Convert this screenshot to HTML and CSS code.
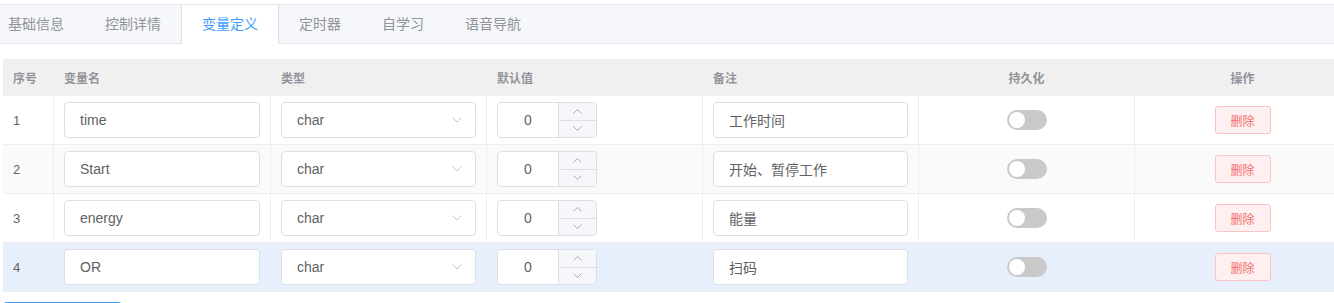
FILE: index.html
```html
<!DOCTYPE html>
<html lang="zh-CN">
<head>
    <meta charset="UTF-8">
    <meta name="viewport" content="width=device-width, initial-scale=1.0">
    <title>变量定义</title>
    <link rel="stylesheet" href="styles.css">
</head>
<body>
    <div class="page">
        <div class="tabs">
            <div class="tab">基础信息</div>
            <div class="tab">控制详情</div>
            <div class="tab active">变量定义</div>
            <div class="tab">定时器</div>
            <div class="tab">自学习</div>
            <div class="tab">语音导航</div>
        </div>

        <div class="var-table">
            <div class="row head">
                <div class="cell">序号</div>
                <div class="cell">变量名</div>
                <div class="cell">类型</div>
                <div class="cell">默认值</div>
                <div class="cell">备注</div>
                <div class="cell center">持久化</div>
                <div class="cell center">操作</div>
            </div>

            <div class="row">
                <div class="cell">1</div>
                <div class="cell"><input class="text-input" type="text" value="time"></div>
                <div class="cell"><div class="select">char<svg class="arrow" width="10" height="6" viewBox="0 0 10 6"><path d="M0.5 0.5 L5 5 L9.5 0.5" fill="none" stroke="#c0c4cc"/></svg></div></div>
                <div class="cell">
                    <div class="num">
                        <span class="num-value">0</span>
                        <span class="num-ctrl">
                            <span class="spin"><svg width="9" height="5" viewBox="0 0 9 5"><path d="M0.5 4.5 L4.5 0.5 L8.5 4.5" fill="none" stroke="#a8abb2"/></svg></span>
                            <span class="spin"><svg width="9" height="5" viewBox="0 0 9 5"><path d="M0.5 0.5 L4.5 4.5 L8.5 0.5" fill="none" stroke="#a8abb2"/></svg></span>
                        </span>
                    </div>
                </div>
                <div class="cell"><input class="text-input" type="text" value="工作时间"></div>
                <div class="cell center"><span class="switch"></span></div>
                <div class="cell center"><button class="btn-del">删除</button></div>
            </div>

            <div class="row striped">
                <div class="cell">2</div>
                <div class="cell"><input class="text-input" type="text" value="Start"></div>
                <div class="cell"><div class="select">char<svg class="arrow" width="10" height="6" viewBox="0 0 10 6"><path d="M0.5 0.5 L5 5 L9.5 0.5" fill="none" stroke="#c0c4cc"/></svg></div></div>
                <div class="cell">
                    <div class="num">
                        <span class="num-value">0</span>
                        <span class="num-ctrl">
                            <span class="spin"><svg width="9" height="5" viewBox="0 0 9 5"><path d="M0.5 4.5 L4.5 0.5 L8.5 4.5" fill="none" stroke="#a8abb2"/></svg></span>
                            <span class="spin"><svg width="9" height="5" viewBox="0 0 9 5"><path d="M0.5 0.5 L4.5 4.5 L8.5 0.5" fill="none" stroke="#a8abb2"/></svg></span>
                        </span>
                    </div>
                </div>
                <div class="cell"><input class="text-input" type="text" value="开始、暂停工作"></div>
                <div class="cell center"><span class="switch"></span></div>
                <div class="cell center"><button class="btn-del">删除</button></div>
            </div>

            <div class="row">
                <div class="cell">3</div>
                <div class="cell"><input class="text-input" type="text" value="energy"></div>
                <div class="cell"><div class="select">char<svg class="arrow" width="10" height="6" viewBox="0 0 10 6"><path d="M0.5 0.5 L5 5 L9.5 0.5" fill="none" stroke="#c0c4cc"/></svg></div></div>
                <div class="cell">
                    <div class="num">
                        <span class="num-value">0</span>
                        <span class="num-ctrl">
                            <span class="spin"><svg width="9" height="5" viewBox="0 0 9 5"><path d="M0.5 4.5 L4.5 0.5 L8.5 4.5" fill="none" stroke="#a8abb2"/></svg></span>
                            <span class="spin"><svg width="9" height="5" viewBox="0 0 9 5"><path d="M0.5 0.5 L4.5 4.5 L8.5 0.5" fill="none" stroke="#a8abb2"/></svg></span>
                        </span>
                    </div>
                </div>
                <div class="cell"><input class="text-input" type="text" value="能量"></div>
                <div class="cell center"><span class="switch"></span></div>
                <div class="cell center"><button class="btn-del">删除</button></div>
            </div>

            <div class="row current">
                <div class="cell">4</div>
                <div class="cell"><input class="text-input" type="text" value="OR"></div>
                <div class="cell"><div class="select">char<svg class="arrow" width="10" height="6" viewBox="0 0 10 6"><path d="M0.5 0.5 L5 5 L9.5 0.5" fill="none" stroke="#c0c4cc"/></svg></div></div>
                <div class="cell">
                    <div class="num">
                        <span class="num-value">0</span>
                        <span class="num-ctrl">
                            <span class="spin"><svg width="9" height="5" viewBox="0 0 9 5"><path d="M0.5 4.5 L4.5 0.5 L8.5 4.5" fill="none" stroke="#a8abb2"/></svg></span>
                            <span class="spin"><svg width="9" height="5" viewBox="0 0 9 5"><path d="M0.5 0.5 L4.5 4.5 L8.5 0.5" fill="none" stroke="#a8abb2"/></svg></span>
                        </span>
                    </div>
                </div>
                <div class="cell"><input class="text-input" type="text" value="扫码"></div>
                <div class="cell center"><span class="switch"></span></div>
                <div class="cell center"><button class="btn-del">删除</button></div>
            </div>
        </div>

        <div class="actions">
            <button class="btn-add" aria-label="新增变量"></button>
        </div>
    </div>
</body>
</html>
```

FILE: styles.css
```css
* {
    margin: 0;
    padding: 0;
    box-sizing: border-box;
}

html, body {
    overflow: hidden;
}

body {
    background: #fff;
    font-family: "Liberation Sans", "Noto Sans CJK SC", sans-serif;
    color: #606266;
}

.page {
    padding: 4px 0 0 3px;
}

/* tab header */
.tabs {
    display: flex;
    height: 40px;
    margin-left: -16px;
    margin-right: -20px;
    background: #f5f7fa;
    border-top: 1px solid #e4e7ed;
    border-bottom: 1px solid #e4e7ed;
}

.tab {
    height: 39px;
    line-height: 38px;
    padding: 0 20px;
    font-size: 14px;
    color: #909399;
    border-left: 1px solid transparent;
    border-right: 1px solid transparent;
    margin-left: -1px;
    white-space: nowrap;
}

.tab:first-child {
    margin-left: 0;
}

.tab.active {
    background: #fff;
    color: #409eff;
    border-left-color: #dcdfe6;
    border-right-color: #dcdfe6;
}

/* variable table */
.var-table {
    margin-top: 15px;
    width: 1348px;
    font-size: 13px;
}

.row {
    display: grid;
    grid-template-columns: 51px 217px 216px 216px 216px 216px 216px;
    height: 49px;
}

.cell {
    display: flex;
    align-items: center;
    padding: 0 10px;
    border-right: 1px solid #ebeef5;
    border-bottom: 1px solid #ebeef5;
}

.cell.center {
    justify-content: center;
}

.row.head {
    height: 37px;
    background: #f0f0f0;
    color: #909399;
    font-size: 12px;
    font-weight: bold;
}

.row.striped {
    background: #fafafa;
}

.row.current {
    background: #e8effc;
}

/* form controls */
.text-input {
    display: block;
    width: 100%;
    height: 36px;
    padding: 0 15px;
    border: 1px solid #dcdfe6;
    border-radius: 4px;
    background: #fff;
    font-family: "Liberation Sans", "Noto Sans CJK SC", sans-serif;
    font-size: 14px;
    color: #606266;
    outline: none;
}

.select {
    display: flex;
    align-items: center;
    justify-content: space-between;
    width: 100%;
    height: 36px;
    padding: 0 13px 0 15px;
    border: 1px solid #dcdfe6;
    border-radius: 4px;
    background: #fff;
    font-size: 14px;
}

.num {
    display: flex;
    width: 100px;
    height: 36px;
    border: 1px solid #dcdfe6;
    border-radius: 4px;
    background: #fff;
    overflow: hidden;
}

.num-value {
    flex: 1;
    line-height: 34px;
    text-align: center;
    font-size: 14px;
}

.num-ctrl {
    display: flex;
    flex-direction: column;
    width: 38px;
    border-left: 1px solid #dcdfe6;
    background: #f5f7fa;
}

.spin {
    flex: 1;
    display: flex;
    align-items: center;
    justify-content: center;
}

.spin + .spin {
    border-top: 1px solid #dcdfe6;
}

.switch {
    position: relative;
    width: 40px;
    height: 20px;
    border-radius: 10px;
    background: #c9c9c9;
}

.switch::after {
    content: '';
    position: absolute;
    top: 2px;
    left: 2px;
    width: 16px;
    height: 16px;
    border-radius: 50%;
    background: #fff;
}

.btn-del {
    width: 56px;
    height: 28px;
    border: 1px solid #fbc4c4;
    border-radius: 3px;
    background: #fef0f0;
    color: #f56c6c;
    font-family: "Liberation Sans", "Noto Sans CJK SC", sans-serif;
    font-size: 12px;
}

.actions {
    margin-top: 10px;
}

.btn-add {
    display: block;
    width: 119px;
    height: 32px;
    border: none;
    border-radius: 4px;
    background: #409eff;
}
```
